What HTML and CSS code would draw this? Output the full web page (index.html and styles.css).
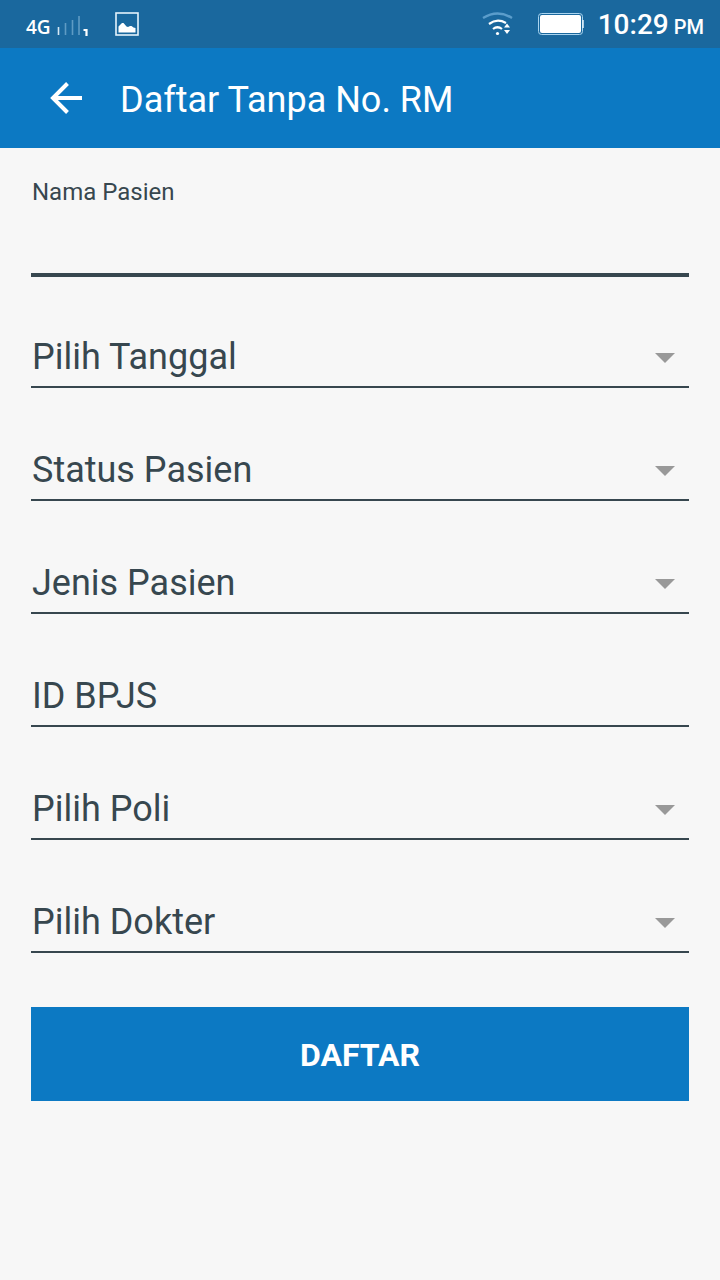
FILE: index.html
```html
<!DOCTYPE html>
<html lang="id">
<head>
  <meta charset="UTF-8" />
  <meta name="viewport" content="width=device-width, initial-scale=1.0"/>
  <title>Daftar Tanpa No. RM</title>
  <link rel="stylesheet" href="styles.css">
</head>
<body>

  <div class="status-bar">
    <span class="network">4G</span>
    <svg class="signal" width="32" height="24" viewBox="0 0 32 24" aria-hidden="true">
      <path d="M1.5 15v8" stroke="#d5e8f4" stroke-width="1.6"/>
      <path d="M8.5 11v12M15.5 8v15M22 4v19" stroke="#5e9bc4" stroke-width="1.6"/>
      <path d="M26.500 18h3v6" fill="none" stroke="#fff" stroke-width="2.200"/>
    </svg>
    <svg class="picture" width="24" height="24" viewBox="0 0 24 24" aria-hidden="true">
      <rect x="1" y="1" width="22" height="22" fill="none" stroke="#e4f3fc" stroke-width="1.6"/>
      <path d="M3.500 20.500v-6l1.500-1.500 2-2h1.500l3 3.500 1.500.5 2-1h1.500l2 1.500 2 .5v4.500z" fill="#fff"/>
    </svg>
    <svg class="wifi" width="32" height="24" viewBox="0 0 32 24" fill="none" aria-hidden="true">
      <path d="M1 6q14.500-9 29 0" stroke="#5b9dcb" stroke-width="2.4"/>
      <path d="M7 12q8-6 17-1M11 17q4.500-3.500 9 0" stroke="#fff" stroke-width="2.2"/>
      <circle cx="15.500" cy="21.500" r="1.6" fill="#fff"/>
      <path d="M22 15.500l3-4 3 4zM22 18l3 4 3-4z" fill="#fff"/>
    </svg>
    <svg class="battery" width="46" height="22" viewBox="0 0 46 22" aria-hidden="true">
      <rect x=".5" y=".5" width="44" height="21" rx="3" fill="none" stroke="#a9d4ef"/>
      <rect x="2" y="2" width="41" height="18" rx="2" fill="#fff"/>
      <path d="M45 7v8" stroke="#e4f3fc" stroke-width="1.5"/>
    </svg>
    <div class="time"><span>10:29</span><small>PM</small></div>
  </div>

  <header class="app-bar">
    <a class="back" href="#" aria-label="Kembali">
      <svg width="32" height="32" viewBox="0 0 32 32" fill="none" stroke="#fff" stroke-width="4" aria-hidden="true">
        <path d="M32 16H3M17.500 1.500L3 16l14.500 14.500"/>
      </svg>
    </a>
    <h1>Daftar Tanpa No. RM</h1>
  </header>

  <form class="form">
    <div class="field field-active">
      <label for="nama">Nama Pasien</label>
      <input id="nama" type="text">
    </div>

    <div class="field">
      <select id="tanggal" aria-label="Pilih Tanggal">
        <option>Pilih Tanggal</option>
      </select>
      <svg class="caret" width="20" height="10" viewBox="0 0 20 10" aria-hidden="true"><path d="M0 0h20L10 10z"/></svg>
    </div>

    <div class="field">
      <select id="status" aria-label="Status Pasien">
        <option>Status Pasien</option>
      </select>
      <svg class="caret" width="20" height="10" viewBox="0 0 20 10" aria-hidden="true"><path d="M0 0h20L10 10z"/></svg>
    </div>

    <div class="field">
      <select id="jenis" aria-label="Jenis Pasien">
        <option>Jenis Pasien</option>
      </select>
      <svg class="caret" width="20" height="10" viewBox="0 0 20 10" aria-hidden="true"><path d="M0 0h20L10 10z"/></svg>
    </div>

    <div class="field">
      <input id="bpjs" type="text" placeholder="ID BPJS" aria-label="ID BPJS">
    </div>

    <div class="field">
      <select id="poli" aria-label="Pilih Poli">
        <option>Pilih Poli</option>
      </select>
      <svg class="caret" width="20" height="10" viewBox="0 0 20 10" aria-hidden="true"><path d="M0 0h20L10 10z"/></svg>
    </div>

    <div class="field">
      <select id="dokter" aria-label="Pilih Dokter">
        <option>Pilih Dokter</option>
      </select>
      <svg class="caret" width="20" height="10" viewBox="0 0 20 10" aria-hidden="true"><path d="M0 0h20L10 10z"/></svg>
    </div>

    <button class="btn-daftar" type="submit">DAFTAR</button>
  </form>

</body>
</html>
```

FILE: styles.css
```css
* {
  box-sizing: border-box;
}

body {
  font-family: Roboto, sans-serif;
  background-color: #f7f7f7;
  color: #37474f;
  margin: 0;
}

.status-bar {
  display: flex;
  align-items: center;
  height: 48px;
  padding: 0 16px 0 26px;
  background-color: #1a689e;
  color: #fff;
}

.network {
  font-family: "Open Sans", sans-serif;
  font-size: 19px;
  font-weight: 600;
  line-height: 24px;
  padding-top: 5px;
}

.signal {
  align-self: flex-end;
  margin: 0 26px 12px 6px;
}

.picture {
  margin-right: auto;
}

.battery {
  margin: 0 14px 0 24px;
}

.time {
  display: flex;
  align-items: baseline;
  gap: 5px;
  font-size: 28px;
  font-weight: 500;
  line-height: 32px;
  padding-top: 4px;
}

.time small {
  font-size: 20px;
}

.app-bar {
  display: flex;
  align-items: center;
  gap: 38px;
  height: 100px;
  padding: 0 50px;
  background-color: #0c79c3;
  color: #fff;
}

.back {
  display: flex;
}

.app-bar h1 {
  margin: 0;
  font-size: 36px;
  font-weight: 400;
  line-height: 48px;
  padding-top: 4px;
}

.form {
  display: flex;
  flex-direction: column;
  gap: 54px;
  padding: 30px 31px;
}

.field {
  display: grid;
  align-items: center;
  border-bottom: 2px solid #37474f;
}

/* focused field has a thicker line */
.field-active {
  box-shadow: 0 2px #37474f;
}

.field label {
  font-size: 24px;
  line-height: 28px;
  padding-left: 1px;
}

.field input,
.field select {
  appearance: none;
  width: 100%;
  height: 57px;
  border: none;
  border-radius: 0;
  outline: none;
  margin: 0;
  padding: 0 1px 2px;
  background: transparent;
  color: inherit;
  font-family: inherit;
  font-size: 36px;
}

.field-active input {
  height: 67px;
}

.field input::placeholder {
  color: inherit;
  opacity: 1;
}

.field select,
.caret {
  grid-area: 1 / 1;
}

.caret {
  justify-self: end;
  margin-right: 14px;
  fill: #999;
  pointer-events: none;
}

.btn-daftar {
  height: 94px;
  border: none;
  padding-top: 3px;
  background-color: #0c79c3;
  color: #fff;
  font-family: inherit;
  font-size: 32px;
  font-weight: bold;
  cursor: pointer;
}
```
